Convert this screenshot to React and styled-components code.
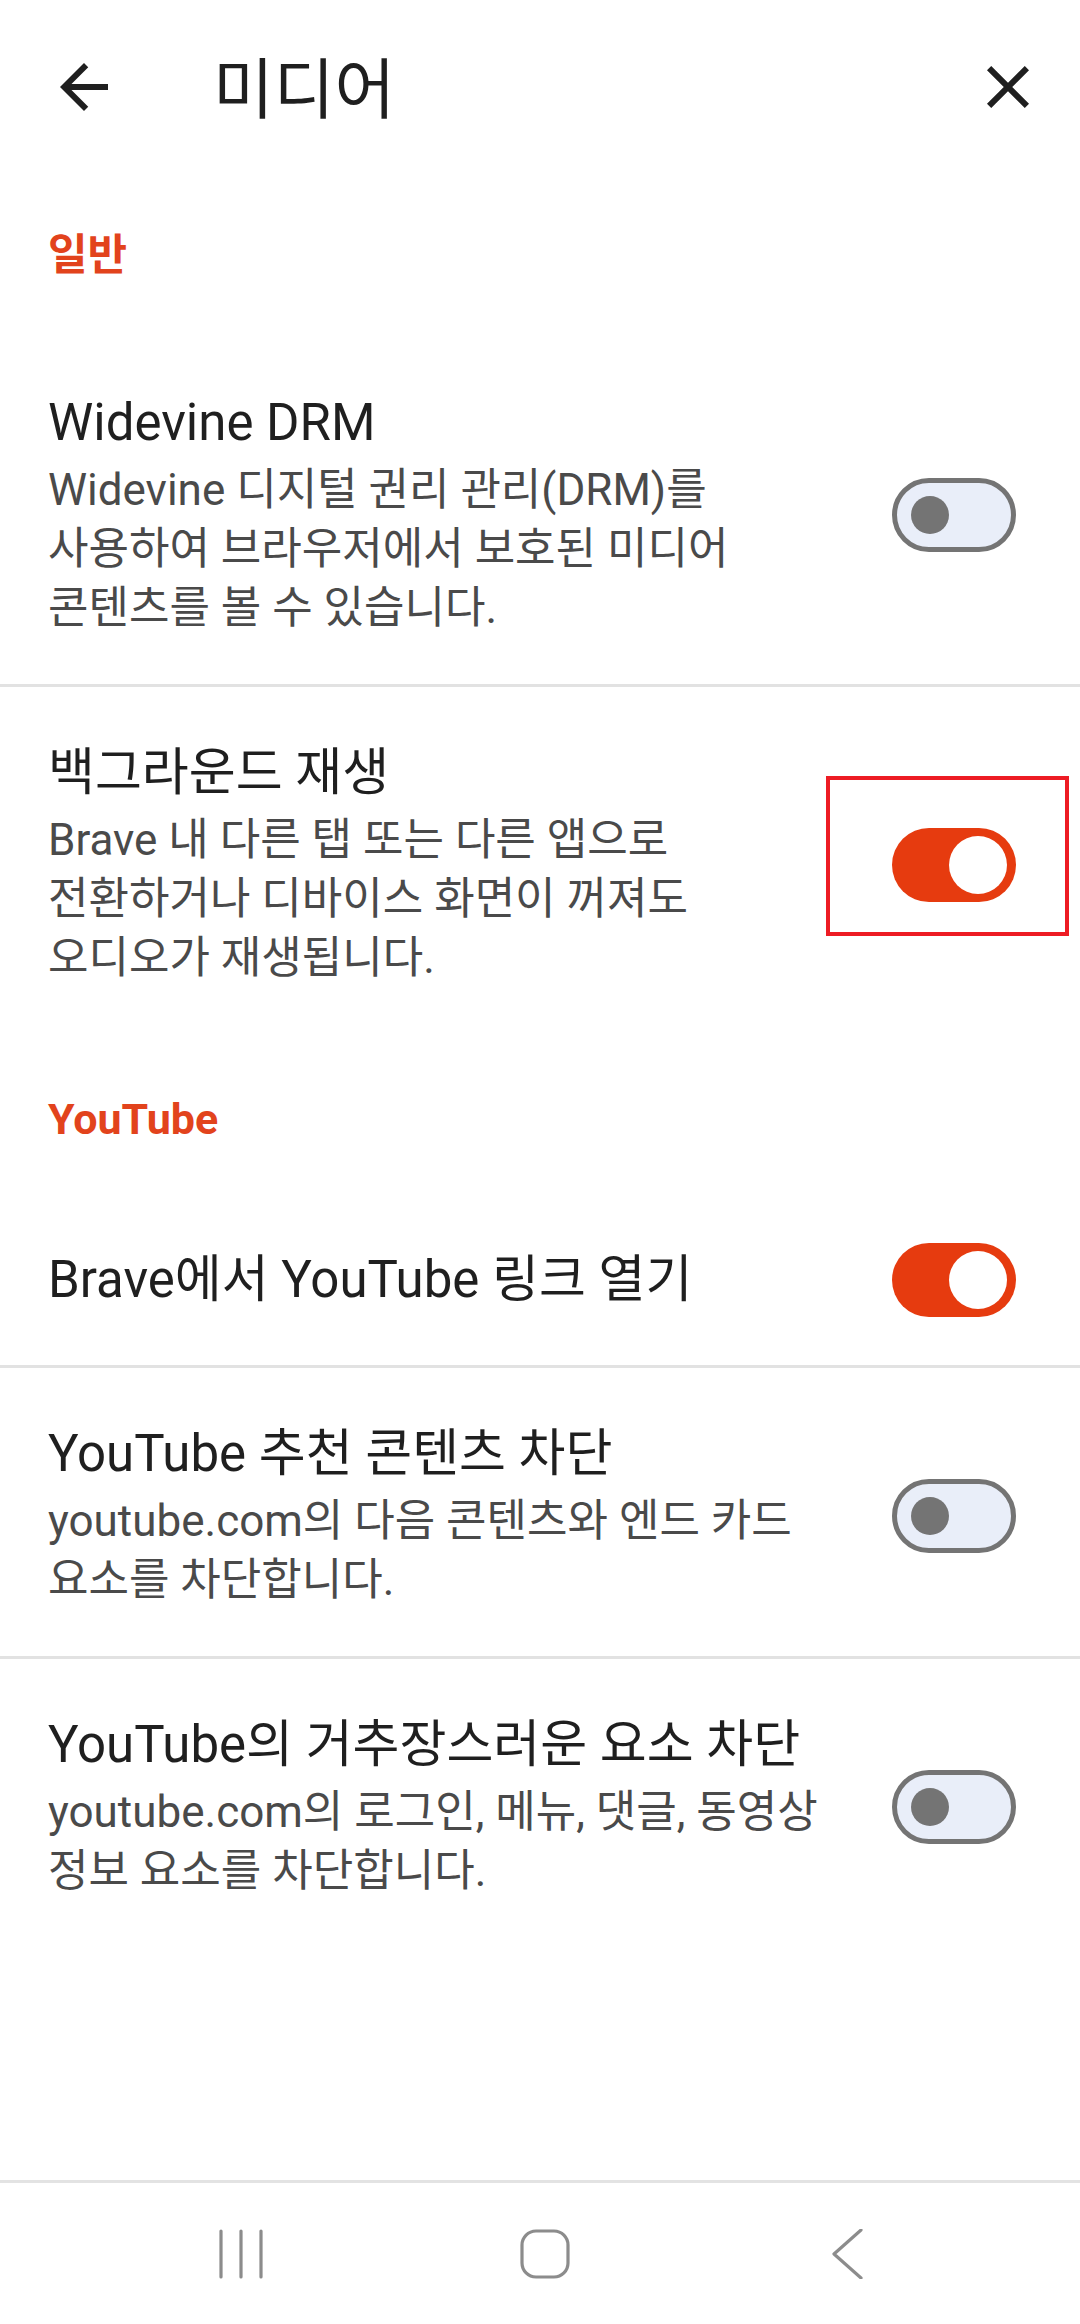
import React from 'react'
import styled, { createGlobalStyle, css } from 'styled-components'

const ORANGE = '#e2431c'
const SWITCH_ON = '#e63b0f'

const GlobalStyle = createGlobalStyle`
  html, body {
    margin: 0;
    padding: 0;
    background: #fff;
  }
  body {
    font-family: Roboto, "Noto Sans CJK KR", sans-serif;
    -webkit-font-smoothing: antialiased;
  }
`

const Page = styled.div`
  width: 1080px;
  min-height: 2324px;
  display: flex;
  flex-direction: column;
  background: #fff;
`

////

const TopBar = styled.header`
  height: 172px;
  box-sizing: border-box;
  padding: 10px 36px 0 48px;
  display: flex;
  align-items: center;
`

const IconButton = styled.button`
  width: 72px;
  height: 72px;
  padding: 0;
  border: 0;
  background: none;
  color: #1f1f1f;
  display: flex;
  align-items: center;
  justify-content: center;
  margin-top: -8px;

  svg {
    width: 72px;
    height: 72px;
    fill: currentColor;
  }
`

const PageTitle = styled.h1`
  flex: 1;
  margin: 0 0 0 93px;
  font-size: 66px;
  line-height: 80px;
  font-weight: 400;
  color: #1f1f1f;
`

////

const SectionHeader = styled.h2`
  margin: 0;
  padding: ${p => p.$top}px 48px ${p => p.$bottom}px;
  font-size: 43px;
  line-height: 48px;
  font-weight: 700;
  color: ${ORANGE};
`

const Row = styled.div`
  position: relative;
  display: flex;
  align-items: center;
  gap: 40px;
  padding: 54px 64px 46px 48px;
  ${p => p.$single && css`
    padding-top: 50px;
    padding-bottom: 48px;
  `}
  ${p => p.$divider && css`
    border-bottom: 3px solid #e2e2e2;
  `}
`

const TextCol = styled.div`
  flex: 1;
  min-width: 0;
`

const RowTitle = styled.div`
  font-size: 51px;
  line-height: 64px;
  color: #1f1f1f;
  white-space: nowrap;
`

const RowDesc = styled.div`
  margin-top: 6px;
  font-size: 44px;
  line-height: 59px;
  color: #4a4a4a;
  white-space: nowrap;
`

////

const SwitchTrack = styled.div`
  position: relative;
  flex: none;
  width: 124px;
  height: 74px;
  box-sizing: border-box;
  border-radius: 37px;
  display: flex;
  align-items: center;
  ${p => p.$on ? css`
    background: ${SWITCH_ON};
    justify-content: flex-end;
    padding-right: 9px;
  ` : css`
    background: #e9eef9;
    border: 5px solid #747474;
    justify-content: flex-start;
    padding-left: 14px;
  `}
`

const SwitchThumb = styled.span`
  display: block;
  border-radius: 50%;
  ${p => p.$on ? css`
    width: 58px;
    height: 58px;
    background: #fff;
  ` : css`
    width: 38px;
    height: 38px;
    background: #747474;
  `}
`

// red annotation frame drawn over the screenshot
const Highlight = styled.span`
  position: absolute;
  left: -66px;
  right: -53px;
  top: -52px;
  bottom: -34px;
  border: 4px solid #ed1c24;
  pointer-events: none;
`

const Switch = ({ on, highlight }) => (
  <SwitchTrack $on={on} role="switch" aria-checked={on}>
    <SwitchThumb $on={on} />
    {highlight && <Highlight />}
  </SwitchTrack>
)

////

const Spacer = styled.div`
  flex: 1;
`

const NavBar = styled.nav`
  height: 144px;
  box-sizing: border-box;
  border-top: 3px solid #e3e3e3;
  display: flex;
  align-items: center;
  justify-content: center;
  gap: 253px;
  padding: 0 0 0 10px;

  svg {
    width: 50px;
    height: 50px;
    fill: none;
    stroke: #8c8c8c;
    stroke-width: 3.2;
    stroke-linecap: round;
    stroke-linejoin: round;
  }
`

const ArrowBack = () => (
  <svg viewBox="0 0 24 24"><path d="M20 11H7.83l5.59-5.59L12 4l-8 8 8 8 1.41-1.41L7.83 13H20v-2z" /></svg>
)

const CloseIcon = () => (
  <svg viewBox="0 0 24 24"><path d="M19 6.41 17.59 5 12 10.59 6.41 5 5 6.41 10.59 12 5 17.59 6.41 19 12 13.41 17.59 19 19 17.59 13.41 12z" /></svg>
)

const settings = [
  { type: 'section', label: '일반', top: 59, bottom: 58 },
  {
    title: 'Widevine DRM',
    desc: ['Widevine 디지털 권리 관리(DRM)를', '사용하여 브라우저에서 보호된 미디어', '콘텐츠를 볼 수 있습니다.'],
    on: false,
    divider: true,
  },
  {
    title: '백그라운드 재생',
    desc: ['Brave 내 다른 탭 또는 다른 앱으로', '전환하거나 디바이스 화면이 꺼져도', '오디오가 재생됩니다.'],
    on: true,
    highlight: true,
  },
  { type: 'section', label: 'YouTube', top: 61, bottom: 50 },
  { title: 'Brave에서 YouTube 링크 열기', on: true, divider: true },
  {
    title: 'YouTube 추천 콘텐츠 차단',
    desc: ['youtube.com의 다음 콘텐츠와 엔드 카드', '요소를 차단합니다.'],
    on: false,
    divider: true,
  },
  {
    title: 'YouTube의 거추장스러운 요소 차단',
    desc: ['youtube.com의 로그인, 메뉴, 댓글, 동영상', '정보 요소를 차단합니다.'],
    on: false,
  },
]

export default function App() {
  return (
    <>
      <GlobalStyle />
      <Page>
        <TopBar>
          <IconButton aria-label="뒤로"><ArrowBack /></IconButton>
          <PageTitle>미디어</PageTitle>
          <IconButton aria-label="닫기"><CloseIcon /></IconButton>
        </TopBar>

        {settings.map((item, i) =>
          item.type === 'section' ? (
            <SectionHeader key={i} $top={item.top} $bottom={item.bottom}>{item.label}</SectionHeader>
          ) : (
            <Row key={i} $divider={item.divider} $single={!item.desc}>
              <TextCol>
                <RowTitle>{item.title}</RowTitle>
                {item.desc && (
                  <RowDesc>
                    {item.desc.map((line, j) => <div key={j}>{line}</div>)}
                  </RowDesc>
                )}
              </TextCol>
              <Switch on={item.on} highlight={item.highlight} />
            </Row>
          )
        )}

        <Spacer />

        <NavBar>
          <svg viewBox="0 0 50 50">
            <path d="M4 2v46M24 2v46M44 2v46" />
          </svg>
          <svg viewBox="0 0 50 50">
            <rect x="2" y="2" width="46" height="46" rx="14" />
          </svg>
          <svg viewBox="0 0 50 50">
            <path d="M38 1 11 25l27 24" />
          </svg>
        </NavBar>
      </Page>
    </>
  )
}
